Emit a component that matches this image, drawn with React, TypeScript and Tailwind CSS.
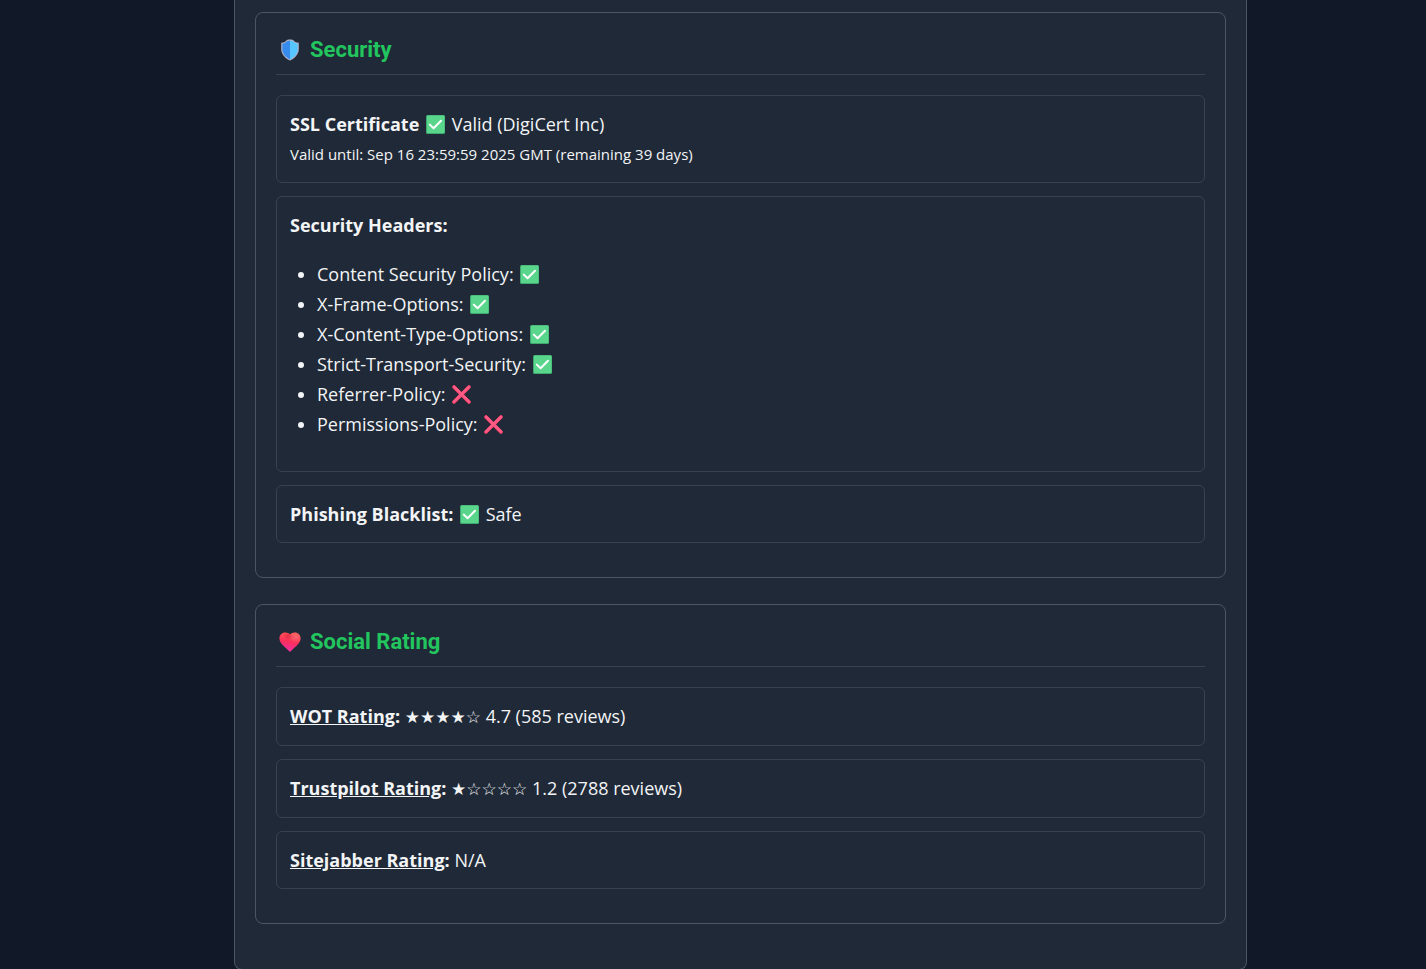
import { ReactNode } from "react";

interface HeaderCheck {
  name: string;
  passed: boolean;
}

interface Rating {
  name: string;
  url: string;
  stars?: number;
  text: string;
}

const headerChecks: HeaderCheck[] = [
  { name: "Content Security Policy", passed: true },
  { name: "X-Frame-Options", passed: true },
  { name: "X-Content-Type-Options", passed: true },
  { name: "Strict-Transport-Security", passed: true },
  { name: "Referrer-Policy", passed: false },
  { name: "Permissions-Policy", passed: false },
];

const ratings: Rating[] = [
  { name: "WOT Rating", url: "#wot", stars: 4, text: "4.7 (585 reviews)" },
  { name: "Trustpilot Rating", url: "#trustpilot", stars: 1, text: "1.2 (2788 reviews)" },
  { name: "Sitejabber Rating", url: "#sitejabber", text: "N/A" },
];

function CheckIcon() {
  return (
    <svg viewBox="0 0 19 19" className="mx-[2px] inline-block h-[19px] w-[19px] align-[-3px]" role="img" aria-label="Yes">
      <rect width="19" height="19" rx="1.5" fill="#3fa76f" />
      <rect x="1" y="0.5" width="17.5" height="17.5" rx="1" fill="#5ad68c" />
      <path d="M3.8 9.6 7.6 13.3 15 5.8" fill="none" stroke="#fff" strokeWidth="2" strokeLinecap="round" strokeLinejoin="round" />
    </svg>
  );
}

function CrossIcon() {
  return (
    <svg viewBox="0 0 19 19" className="mx-[2px] inline-block h-[19px] w-[19px] align-[-3px]" role="img" aria-label="No">
      <path d="M2 2 17 17M17 2 2 17" fill="none" stroke="#f9416b" strokeWidth="3.6" strokeLinecap="round" />
      <path d="M2.2 1.8 17 16.6M16.8 1.8 2 16.6" fill="none" stroke="#ff5c85" strokeWidth="2.4" strokeLinecap="round" />
    </svg>
  );
}

function ShieldIcon() {
  return (
    <svg viewBox="0 0 22 22" className="mx-[3px] h-[22px] w-[22px]" aria-hidden="true">
      <path d="M11 .6C12.8.6 14.3 1 15.2 1.9 16 2.9 17.500 3.500 19.800 3.700V10.500C19.800 15 15.500 19.700 11 21.600 6.500 19.700 2.200 15 2.200 10.500V3.700C4.500 3.500 6 2.900 6.800 1.900 7.700 1 9.200.6 11 .6Z" fill="#aeb0c8" />
      <path d="M11 1.700C9.500 1.700 8.200 2 7.500 2.800 6.500 3.900 5.200 4.500 3.400 4.700V10.500C3.400 14.500 7 18.500 11 20.400Z" fill="#378bed" />
      <path d="M11 1.700C12.500 1.700 13.800 2 14.500 2.800 15.500 3.900 16.800 4.500 18.600 4.700V10.500C18.600 14.500 15 18.500 11 20.400Z" fill="#55c6ff" />
    </svg>
  );
}

function HeartIcon() {
  return (
    <svg viewBox="0 0 22 22" className="mx-[3px] h-[22px] w-[22px]" aria-hidden="true">
      <defs>
        <linearGradient id="heart-base" x1="0.6" y1="0" x2="0.45" y2="1">
          <stop offset="0" stopColor="#ff5550" />
          <stop offset="0.5" stopColor="#fb2f5c" />
          <stop offset="1" stopColor="#ee2fa6" />
        </linearGradient>
        <radialGradient id="heart-shine" cx="0.78" cy="0.22" r="0.35">
          <stop offset="0" stopColor="#ff7078" stopOpacity="0.7" />
          <stop offset="1" stopColor="#ff7078" stopOpacity="0" />
        </radialGradient>
        <radialGradient id="heart-shade" cx="0.4" cy="0.2" r="0.22">
          <stop offset="0" stopColor="#d92843" stopOpacity="0.8" />
          <stop offset="1" stopColor="#d92843" stopOpacity="0" />
        </radialGradient>
      </defs>
      {["heart-base", "heart-shine", "heart-shade"].map((id) => (
        <path
          key={id}
          d="M11 3.600C12 2.200 13.500 1.400 15.700 1.400 19.200 1.400 21.600 4 21.600 7.200 21.600 12.500 15.500 16.300 11.800 20.300 11.300 20.800 10.700 20.800 10.200 20.300 6.500 16.300.4 12.500.4 7.200.4 4 2.800 1.400 6.300 1.400 8.500 1.400 10 2.200 11 3.600Z"
          fill={`url(#${id})`}
        />
      ))}
    </svg>
  );
}

function Stars({ count }: { count: number }) {
  return (
    <span className="font-['DejaVu_Sans',sans-serif] text-[17px]">
      {"★".repeat(count)}
      {"☆".repeat(5 - count)}
    </span>
  );
}

function Section({ icon, title, children }: { icon: ReactNode; title: string; children: ReactNode }) {
  return (
    <section className="rounded-lg border border-[#4b5563] px-5 pt-5 pb-[34px]">
      <h2 className="mb-5 flex items-center gap-[6px] border-b border-[#374151] pt-[1px] pb-2 font-['Roboto',sans-serif] text-[22px] leading-8 font-bold text-[#22c55e]">
        {icon}
        {title}
      </h2>
      <div className="flex flex-col gap-[13px]">{children}</div>
    </section>
  );
}

function Item({ children }: { children: ReactNode }) {
  return <div className="rounded-md border border-[#374151] p-[13px]">{children}</div>;
}

function App() {
  return (
    <div className="min-h-screen bg-[#111827] pl-[55px] font-['Open_Sans',sans-serif] text-[18px] leading-[30px] text-[#f3f4f6]">
      <main className="mx-auto flex max-w-[1013px] flex-col gap-[26px] rounded-b-lg border border-t-0 border-[#4b5563] bg-[#1f2937] px-5 pt-3 pb-[45px]">
        <Section icon={<ShieldIcon />} title="Security">
          <Item>
            <p>
              <strong>SSL Certificate</strong> <CheckIcon /> Valid (DigiCert Inc)
            </p>
            <p className="text-[15px]">Valid until: Sep 16 23:59:59 2025 GMT (remaining 39 days)</p>
          </Item>
          <Item>
            <strong>Security Headers:</strong>
            <ul className="my-[19px] list-disc pl-[27px]">
              {headerChecks.map((check) => (
                <li key={check.name}>
                  {check.name}: {check.passed ? <CheckIcon /> : <CrossIcon />}
                </li>
              ))}
            </ul>
          </Item>
          <Item>
            <strong>Phishing Blacklist:</strong> <CheckIcon /> Safe
          </Item>
        </Section>

        <Section icon={<HeartIcon />} title="Social Rating">
          {ratings.map((rating) => (
            <Item key={rating.name}>
              <strong>
                <a href={rating.url} className="underline">
                  {rating.name}
                </a>
                :
              </strong>{" "}
              {rating.stars !== undefined && <Stars count={rating.stars} />} {rating.text}
            </Item>
          ))}
        </Section>
      </main>
    </div>
  );
}

export default App;
